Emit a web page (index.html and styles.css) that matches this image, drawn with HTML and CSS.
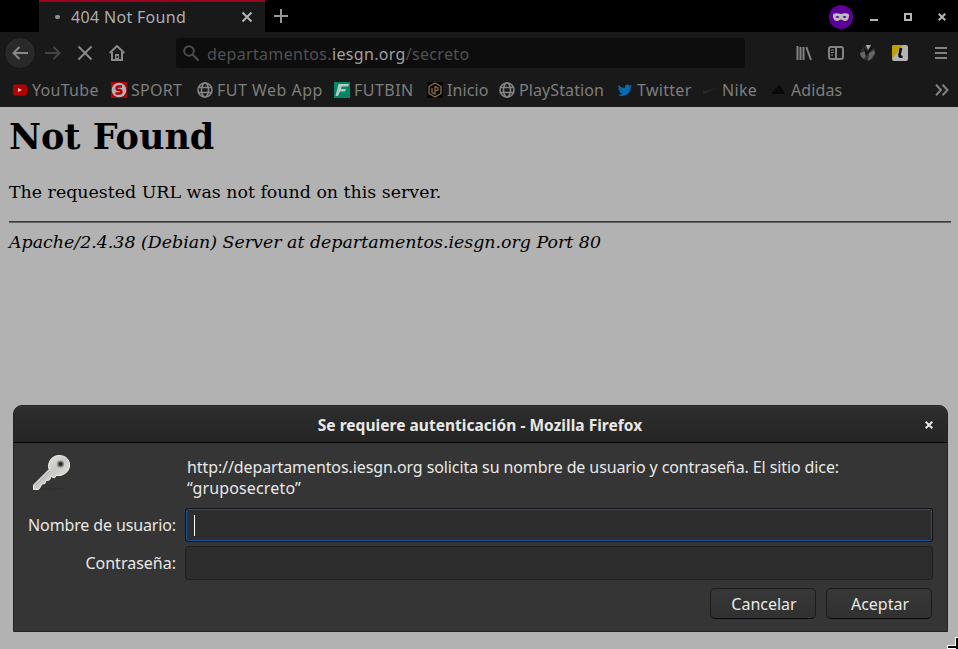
FILE: index.html
```html
<!DOCTYPE html>
<html lang="es">
<head>
<meta charset="utf-8">
<title>404 Not Found</title>
<link rel="stylesheet" href="styles.css">
</head>
<body>
<header class="browser">
  <div class="tabbar">
    <div class="tab">
      <span class="throbber"></span><span class="tab-title">404 Not Found</span>
      <svg class="tab-close" width="12" height="12" viewBox="0 0 12 12"><path d="M1.500 1.500l9 9m0-9l-9 9"/></svg>
    </div>
    <svg class="newtab" width="14" height="14" viewBox="0 0 14 14"><path d="M7 0v14M0 7h14"/></svg>
    <div class="window-controls">
      <svg width="24" height="24" viewBox="0 0 24 24"><circle cx="12" cy="12" r="12" fill="#5d0098"/><path fill="#bcbcbc" fill-rule="evenodd" d="M4 9.500C6 7.500 9.500 8 12 9c2.500-1 6-1.500 8 .5.2 4-1.300 6.500-4 6.500-2 0-2.700-1.500-4-1.500s-2 1.500-4 1.500c-2.700 0-4.200-2.500-4-6.500zM6.500 12c1 1.200 2.800 1.200 3.800 0-1-1.300-2.800-1.300-3.800 0zm7.200 0c1 1.200 2.800 1.200 3.800 0-1-1.300-2.800-1.300-3.800 0z"/></svg>
      <svg class="control" width="8" height="8" viewBox="0 0 8 8"><path d="M0 7h8"/></svg>
      <svg class="control" width="8" height="8" viewBox="0 0 8 8"><path d="M1 1h6v6H1z"/></svg>
      <svg class="control" width="8" height="8" viewBox="0 0 8 8"><path d="M.7.7l6.600 6.600m0-6.600L.7 7.300"/></svg>
    </div>
  </div>
  <nav class="toolbar">
    <div class="nav-buttons">
      <span class="back"><svg width="16" height="14" viewBox="0 0 16 14"><path d="M16 7H1.500M7.500 1l-6 6 6 6"/></svg></span>
      <svg class="dim" width="16" height="14" viewBox="0 0 16 14"><path d="M0 7h14.500M8.500 1l6 6-6 6"/></svg>
      <svg width="16" height="16" viewBox="0 0 16 16"><path d="M1.500 1.500l13 13m0-13l-13 13"/></svg>
      <svg width="16" height="16" viewBox="0 0 16 16"><path d="M.7 8L8 1l7.300 7M3 7v8h10V7"/><path class="solid" d="M6 9h4v6H6z"/><path class="hole" d="M7.500 11h1.500v2H7.500z"/></svg>
    </div>
    <div class="urlbar">
      <svg width="16" height="16" viewBox="0 0 16 16"><circle cx="6" cy="6" r="4.800"/><path d="M9.500 9.500L15.500 15.500"/></svg>
      <span class="url">departamentos.<b>iesgn.org</b>/secreto</span>
    </div>
    <div class="tools">
      <svg width="16" height="16" viewBox="0 0 16 16"><path d="M1.500 1v14M4.500 2v13M7.500 2v13M10.300 2l4.700 13"/></svg>
      <svg width="16" height="16" viewBox="0 0 16 16"><rect x="1" y="2" width="14" height="12" rx="2"/><path d="M8 2v12"/><path d="M3 5h3M3 7.500h3M3 10h2" stroke-width="1.200"/></svg>
      <svg width="16" height="16" viewBox="0 0 16 16"><circle cx="8" cy="8" r="7.500" fill="#303030" stroke="none"/><path stroke="none" fill="#aaa" d="M6 0h5L8 5z"/><path stroke="none" fill="#666" d="M0 8l6-2 1 3-3 5C2 13 0 11 0 8zM9 8l5-3 1 3-4 6-3 2z"/><path stroke="none" fill="#111" d="M4 2l4 5 3-6 2 2-4 5-3 3-1-3z"/></svg>
      <svg width="16" height="16" viewBox="0 0 16 16"><rect width="16" height="16" rx="2" fill="#b3b3b3" stroke="none"/><path stroke="none" fill="#bfa000" d="M2 0h9L0 14V2Q0 0 2 0z"/><path stroke="#080808" stroke-width="2.600" fill="none" d="M9 3L7.500 10Q7 12.500 10.500 11.500"/></svg>
      <svg width="12" height="14" viewBox="0 0 12 14"><path d="M0 2h12M0 7h12M0 12h12"/></svg>
    </div>
  </nav>
  <nav class="bookmarks">
    <a class="bm"><svg width="16" height="16" viewBox="0 0 16 16"><rect x="1" y="2.500" width="14" height="11" rx="2.500" fill="#b30000"/><path d="M6 6l4 2-4 2z" fill="#ccc"/></svg><span>YouTube</span></a>
    <a class="bm"><svg width="16" height="16" viewBox="0 0 16 16"><path fill="#b00008" d="M0 0h16v16H0z"/><circle cx="8" cy="8" r="7.300" fill="#b3b3b3"/><path d="M11 4.500H7.500Q5.500 4.500 5.500 6.200T8 8t2.500 1.800-2 1.700H4.500" fill="none" stroke="#b00008" stroke-width="2.300"/></svg><span>SPORT</span></a>
    <a class="bm wide"><svg class="globe" width="16" height="16" viewBox="0 0 16 16"><circle cx="8" cy="8" r="7"/><ellipse cx="8" cy="8" rx="3.500" ry="7"/><path d="M1.500 5.500h13M1.500 10.500h13"/></svg><span>FUT Web App</span></a>
    <a class="bm wide"><svg width="16" height="16" viewBox="0 0 16 16"><path fill="#008767" d="M0 0h16v16H0z"/><path fill="#b8c9c4" d="M4.500 2H15l-1 2.500H7.800L7 7h5l-1 2.500H6L4 14H1.500z"/></svg><span>FUTBIN</span></a>
    <a class="bm snug"><svg width="16" height="16" viewBox="0 0 16 16"><path fill="#050505" d="M0 0h16v16H0z"/><path d="M8 1l6 3.500v7L8 15l-6-3.500v-7zM8 4v8L5 10.500V6M8 4.500l3 1.500v2L8 9" fill="none" stroke="#897044" stroke-width="1.300"/></svg><span>Inicio</span></a>
    <a class="bm snug"><svg class="globe" width="16" height="16" viewBox="0 0 16 16"><circle cx="8" cy="8" r="7"/><ellipse cx="8" cy="8" rx="3.500" ry="7"/><path d="M1.500 5.500h13M1.500 10.500h13"/></svg><span>PlayStation</span></a>
    <a class="bm"><svg width="16" height="16" viewBox="0 0 16 16"><path fill="#0969ad" d="M1.500 3Q4 6 8 6C7.500 3 10 1.500 12.500 3.500L15 3 13.700 5C14 10 10 14 5 14Q2.500 14 1 12.700q2.500.2 4-1.200-2-.3-2.700-2l1.200-.1Q1.300 8.500 1.200 6.200l1.300.4Q.5 5 1.500 3z"/></svg><span>Twitter</span></a>
    <a class="bm"><svg width="16" height="16" viewBox="0 0 16 16"><path fill="#2b2b2b" d="M2 7C-.5 11 1 12.500 5 10.500L16 5 5 8.800C2.500 9.600 1.300 9 2 7z"/></svg><span>Nike</span></a>
    <a class="bm snug"><svg width="16" height="16" viewBox="0 0 16 16"><path fill="#060606" d="M6 4.500l2.500-1.500 5.500 9h-3.700zM3.500 7.500L6 6l4 6H6.200zM1 10l2.300-1.500L5.700 12H2z"/></svg><span>Adidas</span></a>
    <svg class="more" width="14" height="12" viewBox="0 0 14 12"><path d="M1 .7L6 6l-5 5.300M7.500.7l5 5.300-5 5.300"/></svg>
  </nav>
</header>
<main class="page">
  <h1>Not Found</h1>
  <p>The requested URL was not found on this server.</p>
  <hr>
  <address>Apache/2.4.38 (Debian) Server at departamentos.iesgn.org Port 80</address>
</main>
<section class="dialog">
  <div class="titlebar">
    <strong>Se requiere autenticación - Mozilla Firefox</strong>
    <svg class="dialog-close" width="8" height="8" viewBox="0 0 8 8"><path d="M.7.7l6.600 6.600m0-6.600L.7 7.300"/></svg>
  </div>
  <div class="dialog-body">
    <div class="key"><svg width="42" height="38" viewBox="0 0 42 38"><defs><linearGradient id="metal" x2="1" y2="1"><stop stop-color="#f5f5f2"/><stop offset=".5" stop-color="#c9c9c3"/><stop offset="1" stop-color="#f0f0ec"/></linearGradient></defs><ellipse cx="17" cy="35" rx="17" ry="1.500" fill="#303030"/><path fill="url(#metal)" stroke="#eee" d="M1.500 31L17 15.500C15 8 20 1.500 27 1.500S38 6 37.500 12 31 22.500 24 21.500L22.500 24 19 22.500 17.500 26 14 26.500 13 29.500 10 30 8 33.500 6.500 35.500H1.500z"/><path d="M3 32L18 17" stroke="#aaa"/><circle cx="28.500" cy="10" r="2.800" fill="#292929" stroke="#85857f" stroke-width="1.500"/></svg></div>
    <p class="message"><span class="line1">http://departamentos.iesgn.org solicita su nombre de usuario y contraseña. El sitio dice:</span><br><span class="line2">“gruposecreto”</span></p>
    <label class="user-label">Nombre de usuario:</label><div class="field focused"><span class="caret"></span></div>
    <label>Contraseña:</label><div class="field"></div>
  </div>
  <div class="actions"><button>Cancelar</button><button>Aceptar</button></div>
</section>
<svg class="pointer" width="11" height="12" viewBox="0 0 11 12"><path d="M0 8h8V0h3v12H0z" fill="#fff"/><path d="M1 9h8V1h2v11H9v-1H1z" fill="#000"/></svg>
</body>
</html>
```
FILE: styles.css
```css
* { box-sizing: border-box; }
body { margin: 0; height: 649px; overflow: hidden; background: #b2b2b2; font: 16px/22px "Noto Sans", sans-serif; position: relative; }
svg { display: block; flex: none; }
.browser { height: 107px; background: #191919; color: #7e7e7e; }
.tabbar { height: 32px; background: #000; display: flex; align-items: center; padding-left: 39px; }
.tab { width: 226px; height: 32px; background: #191919; border-top: 2px solid #9b001f; display: flex; align-items: center; padding: 0 12px 0 16px; color: #aeaeae; }
.throbber { width: 5px; height: 4px; border-radius: 2px; background: #929292; }
.tab-title { margin-left: 11px; letter-spacing: .32px; white-space: nowrap; }
.tab-close { margin-left: auto; fill: none; stroke: #b3b3b3; stroke-width: 2; }
.newtab { margin-left: 9px; stroke: #989898; stroke-width: 2; }
.window-controls { display: flex; align-items: center; margin-left: auto; gap: 26px; padding: 2px 12px 0 0; }
.window-controls > :first-child { margin-right: -9px; }
.control, .dialog-close { fill: none; stroke: #b5b5b5; stroke-width: 2; }
.toolbar { height: 42px; display: flex; align-items: center; }
.nav-buttons { width: 176px; display: flex; align-items: center; gap: 16px; padding-left: 4px; fill: none; stroke: #898989; stroke-width: 2; }
.back { width: 32px; height: 32px; border-radius: 50%; background: #292929; border: 1px solid #151515; display: grid; place-items: center; margin-right: -7px; }
.dim { stroke: #444; }
.solid { fill: #898989; stroke: none; }
.hole { fill: #191919; stroke: none; }
.urlbar { width: 569px; height: 30px; background: #0d0d0d; border-radius: 3px; display: flex; align-items: center; padding-left: 7px; }
.urlbar svg { fill: none; stroke: #4c4c4c; stroke-width: 2; }
.url { margin-left: 8px; padding-top: 2px; color: #515151; letter-spacing: .33px; white-space: nowrap; }
.url b { color: #a0a0a0; font-weight: 400; }
.tools { margin-left: auto; width: 162px; display: flex; align-items: center; gap: 16px; fill: none; stroke: #828282; stroke-width: 2; }
.tools > :last-child { margin-left: 11px; }
.bookmarks { height: 33px; display: grid; grid-template-columns: 99px 86px 137px 93px 72px 118px 85px 69px 162px auto; align-items: center; padding-left: 12px; }
.bm { display: flex; align-items: center; gap: 4px; white-space: nowrap; letter-spacing: .3px; }
.bm span { margin-top: -2px; }
.bm.wide { letter-spacing: .48px; }
.bm.snug { letter-spacing: .1px; }
.bookmarks svg { margin-top: -1px; }
.more.more { margin-left: 2px; }
.globe { fill: none; stroke: #858585; stroke-width: 1.6; }
.more { fill: none; stroke: #828282; stroke-width: 2; }
.page { padding: 8px 7px 0 9px; color: #000; font-family: "DejaVu Serif", serif; font-size: 17.4px; line-height: 20px; }
.page h1 { margin: 0; font-size: 35px; line-height: 43px; }
.page p { margin: 24px 0 0; letter-spacing: 0; }
.page hr { margin: 19px 0 9px; border: 0; border-top: 1px solid #3b3b3b; border-bottom: 1px solid #626262; }
.page address { font-style: italic; }
.dialog { position: absolute; left: 13px; top: 405px; width: 935px; height: 227px; border: 1px solid #222; border-radius: 9px 9px 0 0; background: #353535; color: #e8e8e6; }
.titlebar { height: 37px; border-bottom: 1px solid #050505; border-top: 1px solid #383838; border-radius: 8px 8px 0 0; background: linear-gradient(#2d2d2d, #252525); display: grid; grid-template-columns: 1fr 8px; align-items: center; padding: 0 14px 0 21px; text-align: center; font-size: 15.5px; }
.titlebar strong { padding-top: 1px; letter-spacing: .03px; }
.dialog-close { stroke: #e5e5e5; }
.dialog-body { display: grid; grid-template-columns: 162px 748px; grid-template-rows: 56px 34px 34px; column-gap: 9px; row-gap: 4px; padding-top: 5px; }
.key { padding: 6px 0 0 18px; }
.message { margin: 9px 0 0 2px; line-height: 21px; white-space: nowrap; }
.line1 { letter-spacing: -.1px; }
.line2 { letter-spacing: .15px; }
.dialog-body label { align-self: center; text-align: right; white-space: nowrap; }
.dialog-body .user-label { letter-spacing: -.13px; }
.field { border: 1px solid #202020; border-radius: 3px; background: #2d2d2d; }
.focused { border-color: #0b1117; box-shadow: inset 0 0 0 1px #15539e; padding: 6px 8px; }
.caret { display: block; width: 1px; height: 21px; background: #fff; }
.actions { display: flex; justify-content: flex-end; gap: 10px; padding: 8px 15px 0 0; }
button { width: 106px; height: 31px; border: 1px solid #1b1b1b; border-bottom-color: #070707; border-radius: 5px; background: linear-gradient(#373737, #313131); color: #e8e8e6; font: inherit; padding: 0 0 0 2px; }
.pointer { position: absolute; right: 0; bottom: 0; }
```
